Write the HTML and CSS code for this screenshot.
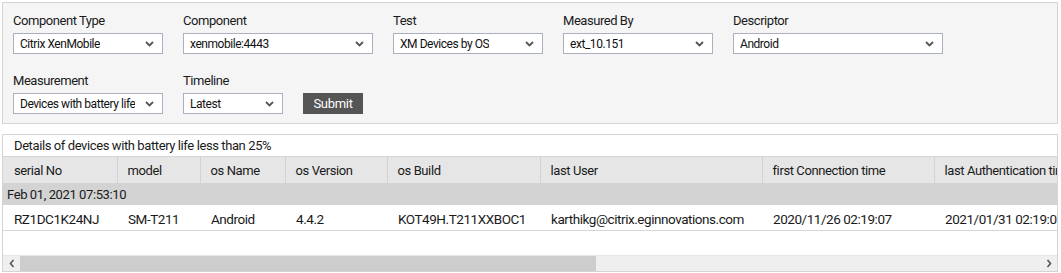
FILE: index.html
```html
<!DOCTYPE html>
<html>
<head>
<meta charset="utf-8">
<link rel="stylesheet" href="styles.css">
</head>
<body>
<div class="filters">
  <div class="row">
    <div class="field">
      <div class="label">Component Type</div>
      <div class="select w150"><span>Citrix XenMobile</span><svg class="chev" width="9" height="6" viewBox="0 0 9 6"><path d="M1 1l3.5 3.5L8 1" fill="none" stroke="#555" stroke-width="1.8"/></svg></div>
    </div>
    <div class="field">
      <div class="label">Component</div>
      <div class="select w190"><span>xenmobile:4443</span><svg class="chev" width="9" height="6" viewBox="0 0 9 6"><path d="M1 1l3.5 3.5L8 1" fill="none" stroke="#555" stroke-width="1.8"/></svg></div>
    </div>
    <div class="field">
      <div class="label">Test</div>
      <div class="select w150"><span>XM Devices by OS</span><svg class="chev" width="9" height="6" viewBox="0 0 9 6"><path d="M1 1l3.5 3.5L8 1" fill="none" stroke="#555" stroke-width="1.8"/></svg></div>
    </div>
    <div class="field">
      <div class="label">Measured By</div>
      <div class="select w150"><span>ext_10.151</span><svg class="chev" width="9" height="6" viewBox="0 0 9 6"><path d="M1 1l3.5 3.5L8 1" fill="none" stroke="#555" stroke-width="1.8"/></svg></div>
    </div>
    <div class="field">
      <div class="label">Descriptor</div>
      <div class="select w210"><span>Android</span><svg class="chev" width="9" height="6" viewBox="0 0 9 6"><path d="M1 1l3.5 3.5L8 1" fill="none" stroke="#555" stroke-width="1.8"/></svg></div>
    </div>
  </div>
  <div class="row row2">
    <div class="field">
      <div class="label">Measurement</div>
      <div class="select w150"><span>Devices with battery life</span><svg class="chev" width="9" height="6" viewBox="0 0 9 6"><path d="M1 1l3.5 3.5L8 1" fill="none" stroke="#555" stroke-width="1.8"/></svg></div>
    </div>
    <div class="field">
      <div class="label">Timeline</div>
      <div class="select w100"><span>Latest</span><svg class="chev" width="9" height="6" viewBox="0 0 9 6"><path d="M1 1l3.5 3.5L8 1" fill="none" stroke="#555" stroke-width="1.8"/></svg></div>
    </div>
    <button class="submit">Submit</button>
  </div>
</div>

<div class="details">
  <div class="title">Details of devices with battery life less than 25%</div>
  <div class="tablewrap">
    <table class="grid">
      <colgroup>
        <col class="c1"><col class="c2"><col class="c3"><col class="c4"><col class="c5"><col class="c6"><col class="c7"><col class="c8">
      </colgroup>
      <thead>
        <tr>
          <th>serial No</th><th>model</th><th>os Name</th><th>os Version</th><th>os Build</th><th>last User</th><th>first Connection time</th><th>last Authentication time</th>
        </tr>
      </thead>
      <tbody>
        <tr class="group"><td colspan="8">Feb 01, 2021 07:53:10</td></tr>
        <tr class="data">
          <td>RZ1DC1K24NJ</td><td>SM-T211</td><td>Android</td><td>4.4.2</td><td>KOT49H.T211XXBOC1</td><td>karthikg@citrix.eginnovations.com</td><td>2020/11/26 02:19:07</td><td>2021/01/31 02:19:07</td>
        </tr>
      </tbody>
    </table>
  </div>
  <div class="spacer"></div>
  <div class="hscroll">
    <div class="sbtn"><svg width="6" height="9" viewBox="0 0 6 9"><path d="M4.5 1L1.5 4.5 4.5 8" fill="none" stroke="#555" stroke-width="1.6"/></svg></div>
    <div class="track"><div class="thumb"></div></div>
    <div class="sbtn"><svg width="6" height="9" viewBox="0 0 6 9"><path d="M1.5 1l3 3.5-3 3.5" fill="none" stroke="#555" stroke-width="1.6"/></svg></div>
  </div>
</div>
</body>
</html>
```
FILE: styles.css
```css
* { box-sizing: border-box; }
body {
  margin: 2px 3px 0 2px;
  font-family: Roboto, "Liberation Sans", sans-serif;
  color: #1a1a1a;
  background: #fff;
  letter-spacing: -0.4px;
}
.filters {
  background: #f5f5f5;
  border: 1px solid #d4d4d4;
  padding: 10px 10px 8px 10px;
  height: 122px;
}
.row {
  display: flex;
  gap: 20px;
  align-items: flex-end;
}
.row2 { margin-top: 19px; }
.label {
  font-size: 13px;
  line-height: 16px;
  margin-bottom: 4px;
  color: #1a1a1a;
  letter-spacing: -0.45px;
}
.select {
  height: 21px;
  background: #fff;
  border: 1px solid #aab0bf;
  display: flex;
  align-items: center;
  justify-content: space-between;
  padding: 0 8px 0 6px;
  font-size: 12px;
  color: #111;
  overflow: hidden;
  white-space: nowrap;
  letter-spacing: -0.45px;
}
.select span { overflow: hidden; }
.chev { flex: none; margin-left: 6px; }
.w100 { width: 100px; }
.w150 { width: 150px; }
.w190 { width: 190px; }
.w210 { width: 210px; }
.submit {
  width: 60px;
  height: 21px;
  border: none;
  background: #555;
  color: #fff;
  font-family: Roboto, "Liberation Sans", sans-serif;
  font-size: 13px;
  letter-spacing: -0.3px;
  padding: 0;
}
.details {
  margin-top: 10px;
  border: 1px solid #d4d4d4;
  height: 138px;
  display: flex;
  flex-direction: column;
  overflow: hidden;
}
.title {
  height: 22px;
  line-height: 22px;
  font-size: 13px;
  padding-left: 11px;
  border-bottom: 1px solid #d6d6d6;
}
.tablewrap { overflow: hidden; }
.grid {
  border-collapse: collapse;
  table-layout: fixed;
  width: 1150px;
  font-size: 13px;
}
.c1 { width: 114px; }
.c2 { width: 83px; }
.c3 { width: 85px; }
.c4 { width: 102px; }
.c5 { width: 153px; }
.c6 { width: 222px; }
.c7 { width: 172px; }
.c8 { width: 219px; }
.grid th {
  background: #e6e6e6;
  font-weight: normal;
  text-align: left;
  height: 26px;
  padding: 1px 0 0 10px;
  border-left: 1px solid #d2d2d2;
  white-space: nowrap;
  overflow: hidden;
}
.grid th:first-child { border-left: none; padding-left: 11px; }
.grid .group td {
  background: #d3d3d3;
  height: 22px;
  padding: 0 0 0 4px;
}
.grid .data td {
  height: 25px;
  padding: 3px 0 0 11px;
  border-bottom: 1px solid #d6d6d6;
  white-space: nowrap;
  overflow: hidden;
  font-size: 13.5px;
  letter-spacing: -0.45px;
}
.grid .data td:first-child { padding-left: 11px; }
.spacer { flex: 1; }
.hscroll {
  height: 16px;
  display: flex;
  background: #efefef;
  border-top: 1px solid #e6e6e6;
}
.sbtn {
  width: 17px;
  flex: none;
  display: flex;
  align-items: center;
  justify-content: center;
}
.track { flex: 1; display: flex; }
.thumb {
  width: 576px;
  background: #cdcdcd;
}
```
